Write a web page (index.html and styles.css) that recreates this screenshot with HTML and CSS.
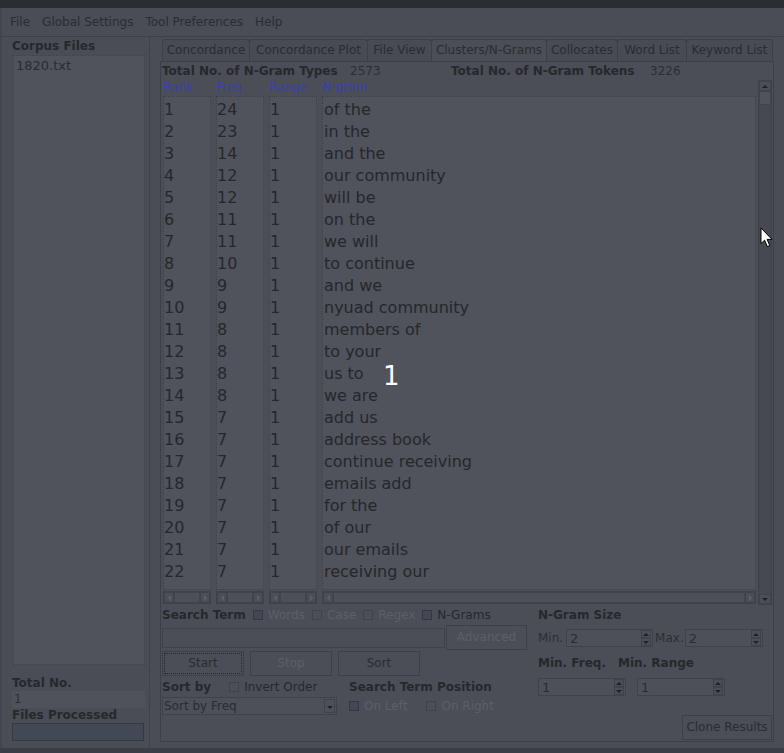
FILE: index.html
```html
<!DOCTYPE html>
<html>
<head>
<meta charset="utf-8">
<link rel="stylesheet" href="styles.css">
</head>
<body>
<div class="topstrip"></div>
<div class="app">
  <div class="menubar">
    <span class="menu">File</span>
    <span class="menu">Global Settings</span>
    <span class="menu">Tool Preferences</span>
    <span class="menu">Help</span>
  </div>
  <div class="main">
    <div class="left">
      <div class="lbl">Corpus Files</div>
      <div class="corpus"><div class="cfile">1820.txt</div></div>
      <div class="lbl total">Total No.</div>
      <div class="field">1</div>
      <div class="lbl">Files Processed</div>
      <div class="progress"></div>
    </div>
    <div class="right">
      <div class="tabs">
        <div class="tab w88">Concordance</div>
        <div class="tab w118">Concordance Plot</div>
        <div class="tab w64">File View</div>
        <div class="tab sel w115">Clusters/N-Grams</div>
        <div class="tab w71">Collocates</div>
        <div class="tab w69">Word List</div>
        <div class="tab w86">Keyword List</div>
      </div>
      <div class="panel">
        <div class="totals">
          <span class="b t1">Total No. of N-Gram Types</span>
          <span class="n1">2573</span>
          <span class="b t2">Total No. of N-Gram Tokens</span>
          <span>3226</span>
        </div>
        <div class="grid">
          <div class="col narrow">
            <div class="hdr">Rank</div>
            <div class="list">
              <div>1</div><div>2</div><div>3</div><div>4</div><div>5</div><div>6</div><div>7</div><div>8</div><div>9</div><div>10</div><div>11</div><div>12</div><div>13</div><div>14</div><div>15</div><div>16</div><div>17</div><div>18</div><div>19</div><div>20</div><div>21</div><div>22</div>
            </div>
            <div class="hscroll"><span class="hb"><i class="al"></i></span><span class="ht"></span><span class="hb"><i class="ar"></i></span></div>
          </div>
          <div class="col narrow">
            <div class="hdr">Freq</div>
            <div class="list">
              <div>24</div><div>23</div><div>14</div><div>12</div><div>12</div><div>11</div><div>11</div><div>10</div><div>9</div><div>9</div><div>8</div><div>8</div><div>8</div><div>8</div><div>7</div><div>7</div><div>7</div><div>7</div><div>7</div><div>7</div><div>7</div><div>7</div>
            </div>
            <div class="hscroll"><span class="hb"><i class="al"></i></span><span class="ht"></span><span class="hb"><i class="ar"></i></span></div>
          </div>
          <div class="col narrow">
            <div class="hdr">Range</div>
            <div class="list">
              <div>1</div><div>1</div><div>1</div><div>1</div><div>1</div><div>1</div><div>1</div><div>1</div><div>1</div><div>1</div><div>1</div><div>1</div><div>1</div><div>1</div><div>1</div><div>1</div><div>1</div><div>1</div><div>1</div><div>1</div><div>1</div><div>1</div>
            </div>
            <div class="hscroll"><span class="hb"><i class="al"></i></span><span class="ht"></span><span class="hb"><i class="ar"></i></span></div>
          </div>
          <div class="col wide">
            <div class="hdr">N-gram</div>
            <div class="list">
              <div>of the</div><div>in the</div><div>and the</div><div>our community</div><div>will be</div><div>on the</div><div>we will</div><div>to continue</div><div>and we</div><div>nyuad community</div><div>members of</div><div>to your</div><div>us to</div><div>we are</div><div>add us</div><div>address book</div><div>continue receiving</div><div>emails add</div><div>for the</div><div>of our</div><div>our emails</div><div>receiving our</div>
            </div>
            <div class="hscroll"><span class="hb"><i class="al"></i></span><span class="ht"></span><span class="hb"><i class="ar"></i></span></div>
          </div>
          <div class="vscroll">
            <span class="vb"><i class="au"></i></span>
            <span class="vthumb"></span>
            <span class="vtrack"></span>
            <span class="vb"><i class="ad"></i></span>
          </div>
        </div>
        <div class="controls">
          <div class="cleft">
            <div class="crow r1">
              <span class="b">Search Term</span>
              <span class="cb dis"><i class="box on"></i>Words</span>
              <span class="cb dis"><i class="box"></i>Case</span>
              <span class="cb dis"><i class="box"></i>Regex</span>
              <span class="cb"><i class="box on"></i>N-Grams</span>
            </div>
            <div class="crow r2">
              <div class="tfield"></div>
              <div class="btn dis adv">Advanced</div>
            </div>
            <div class="crow r3">
              <div class="btn focus">Start</div>
              <div class="btn dis">Stop</div>
              <div class="btn">Sort</div>
            </div>
            <div class="crow r4">
              <div class="sortby">
                <span class="b">Sort by</span>
                <span class="cb inv"><i class="box"></i>Invert Order</span>
              </div>
              <span class="b">Search Term Position</span>
            </div>
            <div class="crow r5">
              <div class="combo"><span>Sort by Freq</span><span class="cbtn"><i class="ad"></i></span></div>
              <span class="cb dis onleft"><i class="box on"></i>On Left</span>
              <span class="cb dis onright"><i class="box"></i>On Right</span>
            </div>
          </div>
          <div class="cright">
            <div class="crow r1"><span class="b">N-Gram Size</span></div>
            <div class="crow s1">
              <span class="slbl">Min.</span>
              <div class="spin w87"><span class="sval">2</span><span class="sbtns"><span class="sb"><i class="au"></i></span><span class="sb"><i class="ad"></i></span></span></div>
              <span class="slbl mx">Max.</span>
              <div class="spin w78"><span class="sval">2</span><span class="sbtns"><span class="sb"><i class="au"></i></span><span class="sb"><i class="ad"></i></span></span></div>
            </div>
            <div class="crow s2l">
              <span class="b mf">Min. Freq.</span>
              <span class="b">Min. Range</span>
            </div>
            <div class="crow s2">
              <div class="spin w88"><span class="sval">1</span><span class="sbtns"><span class="sb"><i class="au"></i></span><span class="sb"><i class="ad"></i></span></span></div>
              <div class="spin w88"><span class="sval">1</span><span class="sbtns"><span class="sb"><i class="au"></i></span><span class="sb"><i class="ad"></i></span></span></div>
            </div>
            <div class="crow clone">
              <div class="btn clonebtn">Clone Results</div>
            </div>
          </div>
        </div>
      </div>
    </div>
  </div>
</div>
<div class="bottomstrip"></div>
<div class="overlay-num">1</div>
<svg class="cursor" width="14" height="22" viewBox="0 0 14 22"><path d="M1 1 L1 16.5 L4.6 13.2 L7.4 19.6 L9.8 18.6 L7.1 12.4 L12 12.4 Z" fill="#ffffff" stroke="#000000" stroke-width="1" stroke-linejoin="miter"/></svg>
</body>
</html>
```

FILE: styles.css
```css
* { box-sizing: border-box; }
html, body { margin: 0; padding: 0; }
body {
  width: 784px;
  height: 753px;
  overflow: hidden;
  background: #4a4d55;
  font-family: "DejaVu Sans", "Liberation Sans", sans-serif;
  font-size: 12px;
  color: #24262b;
  position: relative;
}
i { display: block; font-style: normal; }
.b { font-weight: bold; color: #26282d; }

.topstrip { height: 8px; background: #2b2d32; }

.app { height: 740px; border-left: 2px solid #42454c; }

.menubar {
  height: 29px;
  display: flex;
  align-items: center;
  padding-left: 2px;
  border-bottom: 1px solid #3d4047;
  line-height: 28px;
  color: #2a2c31;
}
.menu { padding: 0 6px; }

.main { display: flex; height: 711px; }

.left {
  width: 148px;
  padding-top: 2px;
  padding-left: 10px;
  border-right: 1px solid #3f4249;
}
.lbl { font-weight: bold; line-height: 14px; color: #26282d; }
.corpus {
  margin-top: 2px;
  margin-left: 1px;
  width: 132px;
  height: 610px;
  background: #50535b;
  border: 1px dotted #3d4047;
  padding: 2px 2px;
}
.cfile { font-size: 13px; line-height: 16px; color: #2a2c31; }
.lbl.total { margin-top: 11px; }
.field {
  margin-top: 1px;
  width: 133px;
  height: 17px;
  background: #4f525a;
  line-height: 17px;
  padding-left: 2px;
  color: #2c2e33;
}
.progress {
  margin-top: 1px;
  width: 132px;
  height: 18px;
  background: #3f4451;
  border: 1px solid #363940;
  background-image: radial-gradient(#474c59 0.6px, transparent 0.8px);
  background-size: 2px 2px;
}

.right { margin-left: 10px; width: 614px; }

.tabs {
  margin-top: 2px;
  height: 22px;
  display: flex;
  padding-left: 2px;
}
.tab {
  height: 22px;
  border: 1px solid #3c3f46;
  border-bottom: none;
  border-radius: 3px 3px 0 0;
  margin-right: -1px;
  text-align: center;
  line-height: 21px;
  color: #2a2c31;
  background: #484b53;
}
.tab.sel { background: #4b4e56; }
.w88 { width: 89px; }
.w118 { width: 119px; }
.w64 { width: 65px; }
.w115 { width: 116px; }
.w71 { width: 72px; }
.w69 { width: 70px; }
.w86 { width: 87px; }

.panel {
  height: 681px;
  border: 1px solid #3c3f46;
  background: #4b4e56;
  padding-left: 1px;
}

.totals {
  margin-top: 2px;
  line-height: 14px;
  display: flex;
  color: #2c2e33;
}
.t1 { width: 188px; }
.n1 { width: 101px; }
.t2 { width: 199px; }

.grid {
  margin-top: 2px;
  margin-left: 1px;
  height: 525px;
  display: flex;
  gap: 5px;
}
.col { display: flex; flex-direction: column; }
.col.narrow { width: 48px; }
.col.wide { width: 434px; }
.hdr { height: 16px; line-height: 15px; color: #3a40ae; }
.list {
  height: 494px;
  background: #50535b;
  border: 1px dotted #3d4047;
  padding: 2px 1px 0 0;
  font-size: 16px;
  line-height: 22px;
  color: #25272b;
  overflow: hidden;
  white-space: nowrap;
}
.wide .list { padding-left: 1px; }
.hscroll {
  margin-top: 1px;
  height: 13px;
  display: flex;
  border: 1px solid #3f4249;
  background: #474a51;
}
.hb {
  width: 10px;
  display: flex;
  align-items: center;
  justify-content: center;
  border: 1px solid #3f4249;
  background: #4b4e56;
}
.ht { flex: 1; border: 1px solid #41444b; background: #4d5058; }
.al { width: 0; height: 0; border-top: 3px solid transparent; border-bottom: 3px solid transparent; border-right: 3px solid #5d6068; }
.ar { width: 0; height: 0; border-top: 3px solid transparent; border-bottom: 3px solid transparent; border-left: 3px solid #5d6068; }
.au { width: 0; height: 0; border-left: 3px solid transparent; border-right: 3px solid transparent; border-bottom: 3px solid #1f2125; }
.ad { width: 0; height: 0; border-left: 3px solid transparent; border-right: 3px solid transparent; border-top: 3px solid #1f2125; }

.vscroll {
  margin-left: -3px;
  width: 14px;
  height: 525px;
  display: flex;
  flex-direction: column;
  border: 1px solid #3f4249;
  background: #464950;
}
.vb {
  height: 10px;
  display: flex;
  align-items: center;
  justify-content: center;
  border: 1px solid #3f4249;
  background: #4b4e56;
}
.vthumb { height: 14px; border: 1px solid #41444b; background: #50535b; }
.vtrack { flex: 1; border-left: 1px solid #43464d; border-right: 1px solid #43464d; }

.controls { display: flex; }
.cleft { width: 366px; }
.cright { margin-left: 10px; width: 234px; }
.crow { display: flex; align-items: center; }
.r1 { margin-top: 3px; height: 14px; }
.r2 { margin-top: 3px; height: 25px; }
.r3 { margin-top: 1px; height: 25px; gap: 6px; }
.r4 { margin-top: 4px; height: 14px; }
.r5 { margin-top: 3px; height: 18px; }

.cb { display: flex; align-items: center; color: #26282d; margin-left: 7px; }
.cb.dis { color: #5c5f67; }
.r1 .cb:first-of-type { margin-left: 6px; }
.box {
  width: 10px;
  height: 10px;
  border: 1px solid #3f4249;
  background: #4c4f57;
  margin-right: 5px;
}
.box.on {
  background: #3d4250;
  background-image: radial-gradient(#4a4f5c 0.6px, transparent 0.8px);
  background-size: 2px 2px;
  border-color: #353840;
}

.tfield {
  width: 283px;
  height: 20px;
  border: 1px solid #3f4249;
  background: #4b4e56;
}
.btn {
  height: 25px;
  width: 82px;
  border: 1px solid #3d4047;
  text-align: center;
  line-height: 23px;
  color: #2a2c31;
  background: #4b4e56;
}
.btn.dis { color: #5c5f67; }
.btn.adv { margin-left: 1px; width: 81px; }
.btn.focus { position: relative; }
.btn.focus::after {
  content: "";
  position: absolute;
  left: 1px; top: 1px; right: 1px; bottom: 1px;
  border: 1px dotted #25272b;
}
.sortby { width: 187px; display: flex; align-items: center; }
.cb.inv { margin-left: 18px; }

.combo {
  width: 175px;
  height: 18px;
  border: 1px solid #3f4249;
  background: #4d5058;
  display: flex;
  align-items: center;
  justify-content: space-between;
  padding-left: 1px;
  color: #2a2c31;
}
.cbtn {
  width: 11px;
  height: 14px;
  margin-right: 1px;
  border: 1px solid #3f4249;
  display: flex;
  align-items: flex-end;
  justify-content: center;
  padding-bottom: 3px;
}
.cb.onleft { margin-left: 12px; }
.cb.onright { margin-left: 19px; }

.s1 { margin-top: 7px; height: 18px; }
.slbl { color: #2c2e33; }
.slbl.mx { margin-left: 2px; margin-right: 1px; }
.spin {
  height: 18px;
  border: 1px solid #3f4249;
  background: #4d5058;
  display: flex;
  align-items: center;
  justify-content: space-between;
  padding-left: 3px;
  margin-left: 3px;
  font-size: 13px;
  color: #2a2c31;
}
.w87 { width: 87px; }
.w78 { width: 78px; margin-left: 0; }
.w88 { width: 88px; margin-left: 0; }
.s2 .spin + .spin { margin-left: 11px; }
.sbtns { display: flex; flex-direction: column; width: 10px; height: 16px; margin-right: 1px; }
.sb {
  flex: 1;
  display: flex;
  align-items: center;
  justify-content: center;
  border: 1px solid #3f4249;
  background: #4b4e56;
}
.s2l { margin-top: 9px; height: 14px; }
.mf { width: 80px; }
.s2 { margin-top: 8px; height: 18px; }
.clone { margin-top: 19px; justify-content: flex-end; }
.clonebtn { width: 90px; }

.bottomstrip {
  height: 5px;
  background: #3b3e45;
}

.overlay-num {
  position: absolute;
  left: 383px;
  top: 361px;
  font-size: 26px;
  line-height: 30px;
  color: #ffffff;
  font-family: "DejaVu Sans", sans-serif;
}
.cursor { position: absolute; left: 760px; top: 227px; }
```
